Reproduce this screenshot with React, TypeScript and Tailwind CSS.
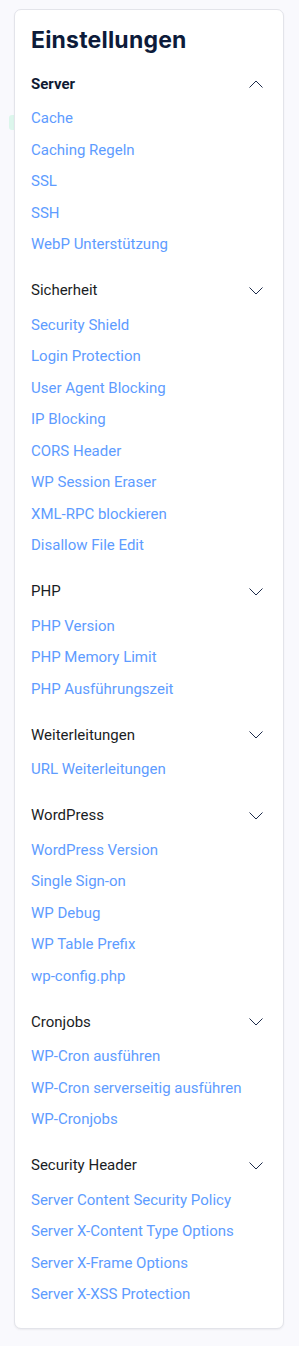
import React from "react";

type Section = { title: string; open?: boolean; bold?: boolean; items: string[] };

const sections: Section[] = [
  { title: "Server", open: true, bold: true, items: ["Cache", "Caching Regeln", "SSL", "SSH", "WebP Unterstützung"] },
  {
    title: "Sicherheit",
    items: [
      "Security Shield",
      "Login Protection",
      "User Agent Blocking",
      "IP Blocking",
      "CORS Header",
      "WP Session Eraser",
      "XML-RPC blockieren",
      "Disallow File Edit",
    ],
  },
  { title: "PHP", items: ["PHP Version", "PHP Memory Limit", "PHP Ausführungszeit"] },
  { title: "Weiterleitungen", items: ["URL Weiterleitungen"] },
  {
    title: "WordPress",
    items: ["WordPress Version", "Single Sign-on", "WP Debug", "WP Table Prefix", "wp-config.php"],
  },
  { title: "Cronjobs", items: ["WP-Cron ausführen", "WP-Cron serverseitig ausführen", "WP-Cronjobs"] },
  {
    title: "Security Header",
    items: [
      "Server Content Security Policy",
      "Server X-Content Type Options",
      "Server X-Frame Options",
      "Server X-XSS Protection",
    ],
  },
];

function Chevron({ up }: { up?: boolean }) {
  return (
    <svg width="14" height="8" viewBox="0 0 14 8" fill="none" className="shrink-0">
      {up ? (
        <path d="M0.5 7.5 L7 1 L13.5 7.5" stroke="#1d2b4a" strokeWidth="1" />
      ) : (
        <path d="M0.5 0.5 L7 7 L13.5 0.5" stroke="#1d2b4a" strokeWidth="1" />
      )}
    </svg>
  );
}

export default function App() {
  return (
    <div className="relative min-h-[1346px] w-[299px] bg-[#f9f9fd] pt-[9px] pl-[14px] pr-[15px]" style={{ fontFamily: "Roboto, 'Liberation Sans', sans-serif" }}>
      <div className="absolute left-[9px] top-[115px] h-[15px] w-[8px] rounded-[3px] bg-[#dcf6ec]" />
      <div className="relative rounded-[7px] border border-[#e3e4ea] bg-white pt-[15px] pb-[17px] pl-[16px] pr-[20px] shadow-[0_1px_2px_rgba(0,0,0,0.06)]">
        <h1
          className="text-[23px] font-bold leading-[30px] tracking-[0.2px] text-[#0d1b3a]"
          style={{ fontFamily: "Inter, Lato, sans-serif" }}
        >
          Einstellungen
        </h1>
        <div className="mt-[13px]">
          {sections.map((s, i) => (
            <div key={s.title} className={i > 0 ? "mt-[14px]" : ""}>
              <div className="mb-[3px] flex h-[32px] items-center justify-between">
                <span className={`text-[15px] ${s.bold ? "font-bold text-[#0f1a33]" : "text-[#1a1d24]"}`}>{s.title}</span>
                <Chevron up={s.open} />
              </div>
              {s.items.map((it) => (
                <div key={it} className="text-[15px] leading-[31.5px] text-[#5e9cff]">
                  {it}
                </div>
              ))}
            </div>
          ))}
        </div>
      </div>
    </div>
  );
}
